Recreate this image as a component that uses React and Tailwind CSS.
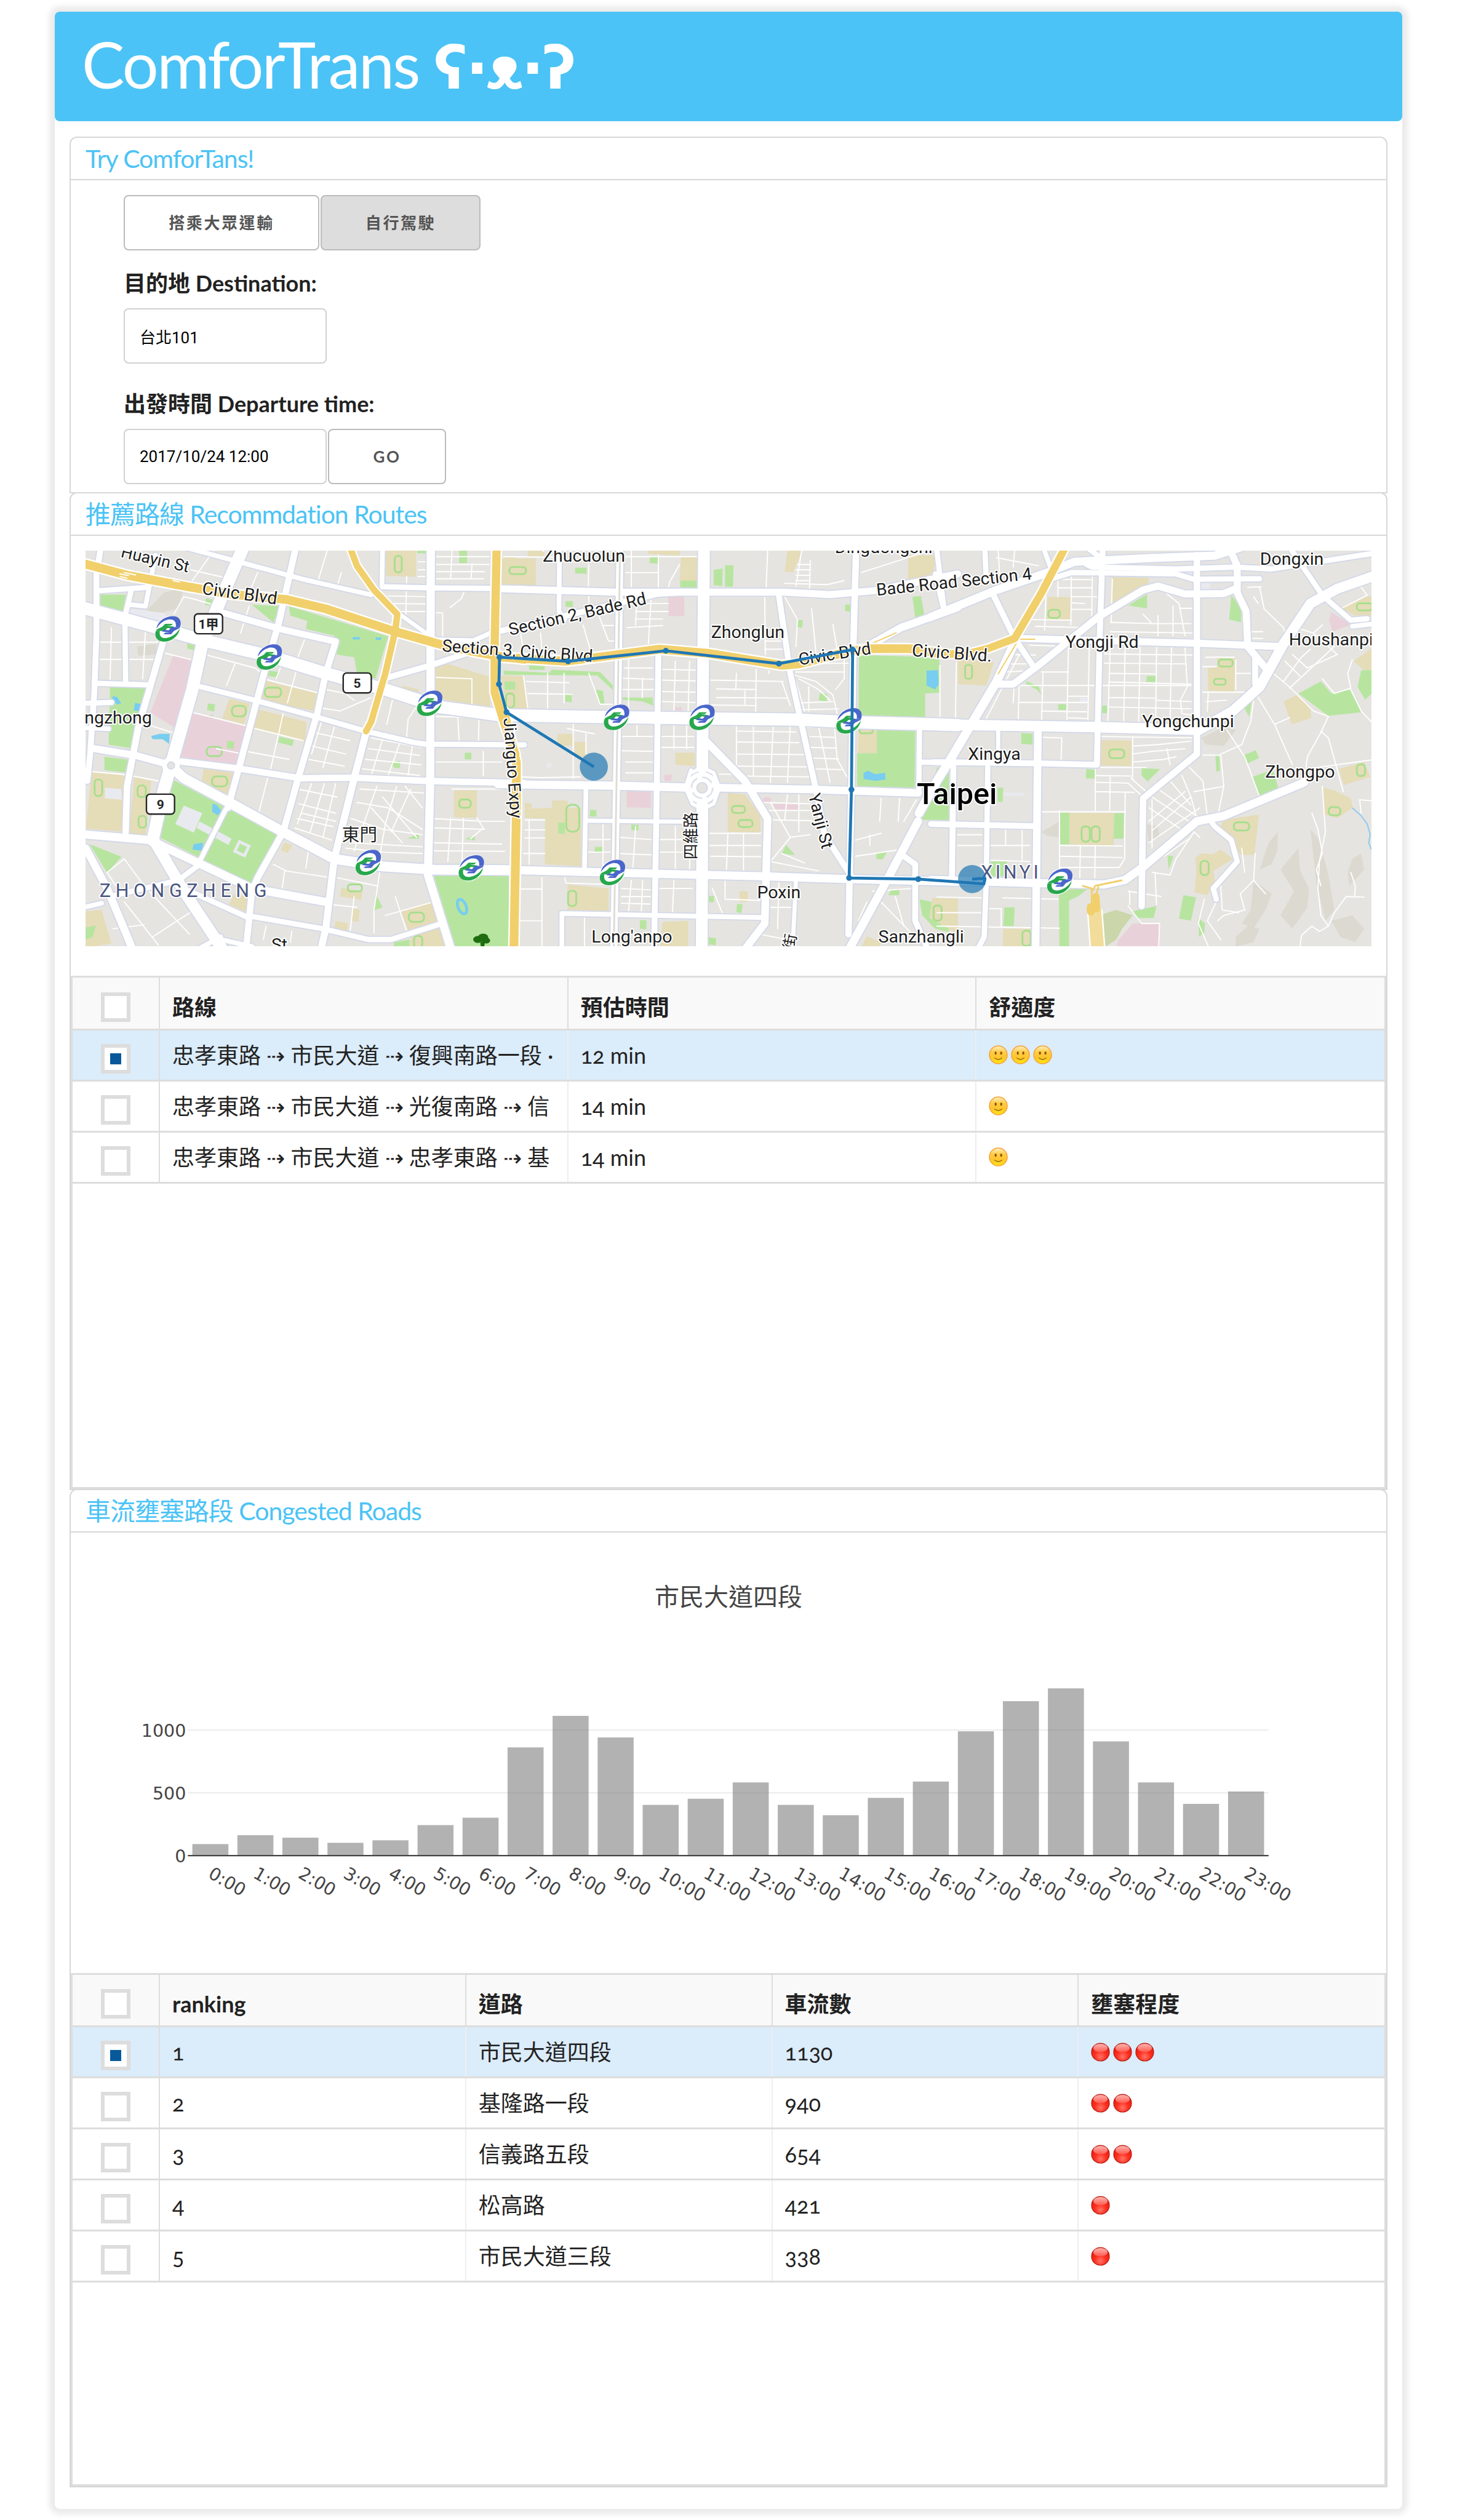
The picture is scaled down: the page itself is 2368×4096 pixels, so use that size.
import React from 'react';

/* ---------- Map data ---------- */

// The map is described in three tiles; each point is projected to map units.
const TILES = {
  w: { x: -26, sx: 0.4847 },
  c: { x: 714, sx: 0.4847 },
  e: { x: 1454, sx: 0.5102 },
};

function project(tile, points) {
  const t = TILES[tile];
  return points
    .trim()
    .split(/\s+/)
    .map((p) => {
      const [x, y] = p.split(',').map(Number);
      return `${(t.x + x * t.sx).toFixed(1)},${(y * 0.4592 - 20).toFixed(1)}`;
    })
    .join(' ');
}

const ROADS = [
  ['w', '40,255 200,300 480,380 700,435 900,500 1110,560 1300,625 1510,655', 21],
  ['c', '-20,655 230,660 700,668 1040,672 1240,682 1600,692', 21],
  ['e', '-20,690 535,700 870,710', 18],
  ['w', '610,30 520,250 465,390 430,560 355,840 330,930 290,1120', 21],
  ['w', '795,30 735,310 680,510 600,830 555,1000', 11],
  ['w', '548,1005 460,1190', 8],
  ['w', '108,30 92,130 92,350 85,560 70,800 60,900', 10],
  ['w', '105,192 270,180', 9],
  ['w', '300,60 265,250 215,245', 8],
  ['w', '215,190 192,290 195,530', 9],
  ['w', '328,380 240,700 200,920 195,1090', 11],
  ['w', '95,537 285,543', 9],
  ['w', '75,778 230,805 350,840', 12],
  ['w', '390,828 600,855 810,890 1000,888 1250,900 1600,908', 11],
  ['w', '40,612 145,608', 9],
  ['w', '40,702 135,706', 8],
  ['w', '460,550 650,600 860,660 1040,715 1210,757 1250,763 1600,766', 9],
  ['w', '540,275 740,335 935,382 900,500 870,650 800,900 750,1090 660,1260 640,1310 620,1516', 11],
  ['w', '1042,720 1000,890 930,1190 900,1450 880,1540', 12],
  ['w', '350,840 400,890 560,980 750,1090 930,1190 1100,1218 1280,1230 1560,1232', 17],
  ['w', '40,1098 280,1120 420,1190 640,1300 900,1350', 14],
  ['w', '300,1130 400,1310 545,1540', 19],
  ['w', '54,1150 130,1300 225,1540', 13],
  ['w', '1270,30 1268,900 1260,1250 1345,1540', 14],
  ['w', '1100,178 1270,182 1600,185', 9],
  ['w', '1270,375 1420,378 1480,350 1600,320', 8],
  ['w', '1110,518 1270,470 1440,410', 10],
  ['w', '400,30 610,90 820,150 1060,208', 8],
  ['w', '1100,30 1098,175', 8],
  ['w', '630,1402 890,1450 1050,1490 1130,1490 1310,1430', 9],
  ['w', '160,1325 380,1270 450,1215', 9],
  ['w', '400,1300 620,1405', 9],
  ['w', '40,1372 110,1355', 8],
  ['w', '530,1490 640,1516', 8],
  ['w', '460,1520 530,1480', 8],
  ['w', '1160,280 1280,370', 7],
  ['c', '-20,185 400,198 730,198 990,198 1150,207 1310,192 1600,130', 12],
  ['c', '197,30 195,270 215,300', 8],
  ['c', '410,30 402,640 388,1540', 12],
  ['c', '545,430 540,900 530,1540', 10],
  ['c', '706,30 700,850', 20],
  ['c', '700,990 698,1540', 20],
  ['c', '1242,30 1232,400 1225,930 1215,1470', 11],
  ['c', '970,212 1010,500 1100,930 1130,1100 1225,1255', 10],
  ['c', '-10,342 220,285 540,205 640,198', 10],
  ['c', '-20,912 400,918 660,925', 14],
  ['c', '740,925 1100,932 1460,945', 13],
  ['c', '-20,1230 530,1245 920,1255 1220,1265 1600,1275', 14],
  ['c', '715,755 850,900 930,1040 920,1430 840,1540', 13],
  ['c', '290,930 285,1220', 8],
  ['c', '290,1048 670,1052', 7],
  ['c', '205,1540 205,1393 920,1408', 8],
  ['c', '1030,1270 1020,1480', 7],
  ['c', '1410,1180 1450,1210 1450,1420 1500,1540', 10],
  ['c', '1465,700 1463,940', 9],
  ['c', '1470,830 1600,832', 9],
  ['c', '1290,395 1400,330 1600,255', 13],
  ['c', '1525,30 1550,250', 9],
  ['c', '1210,1540 1350,1270 1460,1050', 14],
  ['c', '660,860 640,925 665,985 700,1005 740,985 760,925 740,870 700,850 660,870', 6],
  ['e', '-20,290 200,190 370,125 460,85 700,72 930,62 1020,30', 14],
  ['e', '500,95 520,105 800,112 1000,105 1120,112 1470,52', 9],
  ['e', '380,150 450,125 800,130 860,150 1080,148', 9],
  ['e', '555,30 545,350 535,840 340,835 -10,830', 10],
  ['e', '500,30 560,80', 9],
  ['e', '870,60 870,800 690,965 685,1365', 11],
  ['e', '985,50 1005,100 1005,200 1035,270 1040,400 1100,480', 12],
  ['e', '1065,440 1065,540', 10],
  ['e', '1470,135 1340,185 1250,240 1160,390 1080,550 990,640 870,715', 17],
  ['e', '275,370 440,375 870,388 1145,400', 12],
  ['e', '195,540 255,540 340,470 440,380 540,290 690,190 740,175 830,205 960,203 1000,185', 12],
  ['e', '185,200 260,370 320,470', 10],
  ['e', '160,30 165,150', 9],
  ['e', '355,30 385,120', 8],
  ['e', '-5,130 20,250', 9],
  ['e', '1180,30 1290,210 1385,302 1440,297', 9],
  ['e', '1390,325 1470,315', 8],
  ['e', '260,385 200,530 120,680 45,820 0,900 -60,1020', 15],
  ['e', '338,715 330,1540', 13],
  ['e', '205,715 205,830', 7],
  ['e', '170,850 165,1270 158,1480 130,1540', 9],
  ['e', '55,850 50,1270', 10],
  ['e', '-20,1060 320,1068', 10],
  ['e', '-20,1268 330,1280 560,1285 630,1268 690,1220 870,1050 960,1030 1230,905', 14],
  ['e', '910,1040 930,1070 985,1120 1005,1200 925,1300 935,1340', 9],
];

const HIGHWAYS = [
  ['w', '40,90 200,135 400,175 560,205 760,225 900,260 1130,340 1330,400 1500,435 1600,448', 15],
  ['w', '985,30 1010,100 1070,190 1152,280 1145,340 1110,500 1060,680 1042,715', 11],
  ['w', '1502,30 1495,400 1495,570 1530,690 1568,800', 14],
  ['c', '0,640 45,830 45,1000 36,1540', 15],
  ['c', '-10,440 220,455 390,432 550,410 720,425 980,470 1040,465 1230,415 1300,408 1430,408 1540,425', 15],
  ['e', '430,30 350,200 260,370 170,408 100,428 0,428 -50,415', 13],
];

const HIGHWAY_RAMPS = [
  ['c', '1290,392 1383,349', 2],
  ['e', '270,380 205,502', 2],
  ['e', '275,373 328,373', 2],
  ['e', '488,1290 518,1300 518,1370', 3],
  ['e', '618,1270 530,1290 520,1310', 3],
  ['e', '540,1295 532,1330', 3],
];

const GREEN = [
  ['w', '360,895 730,1100 640,1285 315,1110'],
  ['w', '770,250 1120,362 1075,520 1010,500 1000,440 940,430 930,360 830,335 835,305 775,285'],
  ['w', '640,245 740,250 715,310'],
  ['w', '140,550 278,550 220,780 135,765'],
  ['w', '100,207 195,207 187,267 103,250'],
  ['w', '120,810 214,822 205,870 120,860'],
  ['w', '68,1135 180,1182 130,1242'],
  ['w', '1280,1248 1545,1250 1545,1520 1358,1520'],
  ['w', '478,220 515,230 500,250 475,245'],
  ['w', '412,388 438,390 436,415 412,408'],
  ['w', '484,612 510,615 507,642 482,637'],
  ['w', '553,750 578,753 576,782 551,778'],
  ['w', '736,735 788,748 782,770 732,757'],
  ['w', '700,490 735,495 730,515 697,510'],
  ['w', '1390,795 1413,795 1413,820 1390,820'],
  ['w', '1128,832 1162,825 1162,853 1140,850'],
  ['w', '1370,44 1398,44 1398,90 1370,90'],
  ['w', '1222,44 1262,44 1255,54 1222,54'],
  ['w', '1075,1320 1100,1370 1070,1382'],
  ['w', '1530,530 1568,530 1568,560 1530,560'],
  ['w', '1185,1115 1228,1098 1228,1115'],
  ['w', '1390,1115 1425,1104 1425,1122'],
  ['w', '54,1445 90,1438 80,1480 54,1490'],
  ['w', '1140,1500 1195,1490 1195,1516 1140,1516'],
  ['c', '1252,432 1535,440 1535,572 1485,575 1485,662 1250,656'],
  ['c', '1315,705 1450,710 1448,925 1245,920 1245,797 1315,797'],
  ['c', '0,490 160,498 170,486 340,495 385,545 385,562 330,508 0,505'],
  ['c', '90,470 145,473 145,487 90,487'],
  ['c', '417,590 525,590 527,620 490,605 417,598'],
  ['c', '325,560 350,565 355,612 340,612'],
  ['c', '217,575 240,575 240,607 217,605'],
  ['c', '780,98 810,98 808,178 780,178'],
  ['c', '740,115 772,110 770,175 740,172'],
  ['c', '218,232 244,232 244,254 218,252'],
  ['c', '252,107 292,107 292,130 252,128'],
  ['c', '515,66 543,66 543,92 515,90'],
  ['c', '622,155 680,155 680,182 622,182'],
  ['c', '1440,215 1470,212 1482,280 1450,292'],
  ['c', '1203,245 1225,243 1222,272 1203,268'],
  ['c', '1035,302 1054,302 1052,330 1032,328'],
  ['c', '1115,573 1140,577 1138,605 1110,600'],
  ['c', '305,1008 327,1008 327,1033 303,1032'],
  ['c', '192,1055 216,1055 216,1098 192,1095'],
  ['c', '450,1062 476,1064 474,1085 450,1083'],
  ['c', '322,1145 348,1145 348,1168 320,1166'],
  ['c', '980,1170 995,1138 1027,1176'],
  ['c', '1315,1165 1352,1163 1335,1192 1312,1190'],
  ['c', '1365,1305 1395,1305 1393,1325 1355,1325'],
  ['c', '1465,1340 1508,1350 1500,1410 1568,1450 1568,1462 1520,1450 1475,1400'],
  ['c', '480,1418 503,1418 503,1452 480,1450'],
  ['c', '720,1482 748,1485 748,1511 720,1508'],
  ['c', '720,1328 742,1328 740,1352 720,1350'],
  ['c', '822,1358 842,1358 838,1392 820,1388'],
  ['c', '-5,1248 12,1248 10,1520 -5,1520'],
  ['e', '0,850 40,850 40,1045 -65,1045 -20,960'],
  ['e', '203,925 222,925 220,978 203,978'],
  ['e', '703,205 703,258 640,248'],
  ['e', '985,210 1018,255 1018,310 978,300'],
  ['e', '702,510 733,510 733,532 700,532'],
  ['e', '406,615 433,615 433,636 406,636'],
  ['e', '550,620 569,620 569,648 550,648'],
  ['e', '282,722 320,724 320,765 282,762'],
  ['e', '500,856 530,858 528,892 498,890'],
  ['e', '685,853 747,856 705,902 685,880'],
  ['e', '1030,630 1055,592 1045,662'],
  ['e', '1210,575 1285,530 1320,575 1385,560 1420,645 1310,658'],
  ['e', '1420,488 1470,488 1470,560 1433,598 1408,550'],
  ['e', '1025,805 1067,786 1078,815 1038,836'],
  ['e', '1055,885 1125,858 1142,925 1078,955'],
  ['e', '932,806 945,808 947,862 935,866'],
  ['e', '410,1017 443,1017 443,1136 410,1136'],
  ['e', '593,1020 626,1020 624,1115 591,1115'],
  ['e', '180,1200 235,1200 230,1255 180,1255'],
  ['e', '408,1305 505,1300 475,1328 442,1345 442,1520 410,1520'],
  ['e', '225,1370 260,1370 257,1440 222,1440'],
  ['e', '655,1385 735,1365 725,1410 670,1410'],
  ['e', '825,1325 867,1333 850,1420 810,1412'],
  ['e', '772,1178 792,1180 775,1230'],
  ['e', '875,1410 897,1430 895,1465 877,1480'],
  ['e', '-20,430 8,440 8,480 -20,480'],
  ['e', '297,528 340,548 350,580 335,560 300,542'],
];

const SAND = [
  ['w', '75,867 195,880 182,1088 55,1078'],
  ['w', '225,885 285,900 265,1105 207,1098'],
  ['w', '1112,40 1218,40 1218,140 1112,138'],
  ['w', '1530,65 1568,65 1568,175 1528,170'],
  ['w', '1285,470 1330,465 1475,512 1480,627 1285,592'],
  ['w', '560,595 632,612 612,690 535,668'],
  ['w', '655,632 832,680 828,755 645,705'],
  ['w', '690,528 870,575 860,640 675,600'],
  ['w', '1352,935 1432,935 1432,1037 1352,1035'],
  ['w', '1165,1385 1275,1348 1308,1428 1190,1455'],
  ['w', '1200,1475 1315,1440 1350,1520 1195,1520'],
  ['w', '54,1385 110,1380 145,1505 54,1520'],
  ['w', '470,853 575,870 555,950 462,905'],
  ['w', '575,1322 635,1332 620,1388 560,1360'],
  ['w', '955,1298 1030,1310 1025,1342 950,1330'],
  ['w', '935,1420 980,1430 975,1462 930,1452'],
  ['w', '995,1375 1020,1380 1015,1425 990,1420'],
  ['w', '755,1128 782,1140 765,1168 742,1158'],
  ['w', '1170,545 1228,560 1225,572 1170,560'],
  ['c', '-10,73 113,73 113,172 -10,170'],
  ['c', '85,40 145,40 140,66 85,66'],
  ['c', '510,40 620,40 620,62 510,56'],
  ['c', '625,68 684,68 684,156 620,156'],
  ['c', '1000,40 1053,40 1020,125 990,122'],
  ['c', '1425,60 1520,62 1515,128 1425,162'],
  ['c', '-10,508 70,510 85,630 10,630'],
  ['c', '190,725 243,725 243,770 190,768'],
  ['c', '250,755 289,755 289,815 250,812'],
  ['c', '605,795 673,795 673,845 605,840'],
  ['c', '75,980 98,985 98,1003 170,1000 170,973 225,973 225,1000 272,1000 272,1217 145,1210 145,1040 75,1038'],
  ['c', '790,945 850,950 905,1030 905,1092 790,1090'],
  ['c', '225,1285 370,1300 370,1385 225,1380'],
  ['c', '560,1425 650,1420 650,1520 550,1520'],
  ['c', '1250,705 1315,705 1315,797 1248,797'],
  ['c', '1510,1335 1600,1340 1600,1470 1500,1410'],
  ['c', '832,1310 860,1310 860,1350 830,1350'],
  ['c', '1280,1478 1330,1500 1320,1520 1260,1520'],
  ['e', '70,440 190,460 165,545 70,540'],
  ['e', '370,215 448,217 448,302 367,300'],
  ['e', '587,142 709,145 705,190 585,240'],
  ['e', '938,442 998,445 996,568 907,565 907,480 938,478'],
  ['e', '545,748 651,750 650,845 545,842'],
  ['e', '443,1018 593,1020 591,1140 443,1136'],
  ['e', '1160,605 1205,580 1250,625 1253,665 1188,690'],
  ['e', '1350,255 1440,212 1470,220 1470,285 1400,285'],
  ['e', '1395,455 1470,395 1470,490 1430,488'],
  ['e', '1345,855 1430,830 1450,885 1362,915'],
  ['e', '1292,925 1330,935 1385,965 1392,1000 1340,1038 1298,1025'],
  ['e', '960,1045 1078,1025 1062,1175 1015,1175 990,1110 945,1080'],
  ['e', '865,1185 885,1170 925,1172 950,1155 990,1190 925,1235 930,1270 905,1325 862,1315 868,1240'],
  ['e', '0,1335 70,1338 68,1448 20,1460 -20,1440'],
  ['e', '222,1450 315,1450 315,1520 220,1520'],
];

const PINK = [
  ['w', '362,435 442,452 372,705 282,645'],
  ['w', '430,648 620,698 588,842 385,810'],
  ['c', '580,215 636,215 636,287 580,287'],
  ['c', '433,935 520,938 520,1000 433,998'],
  ['c', '565,878 594,876 590,900 567,900'],
  ['c', '920,960 943,962 940,982 905,980'],
  ['c', '950,985 1040,988 1040,1008 950,1005'],
  ['c', '605,626 628,626 626,640 605,640'],
  ['e', '1320,272 1385,318 1325,345 1312,305'],
  ['e', '655,1430 745,1430 745,1520 600,1520 605,1495'],
];

const WATER = [
  ['w', '150,585 165,588 180,612 165,615 145,600'],
  ['w', '228,610 253,615 250,642 223,638'],
  ['w', '285,733 315,725 350,725 348,762 325,745 290,745'],
  ['w', '500,985 515,988 532,1012 520,1028 500,1015'],
  ['w', '435,1135 468,1130 465,1160 430,1155'],
  ['w', '995,365 1020,365 1020,374 995,374'],
  ['w', '1076,366 1096,366 1094,376 1076,376'],
  ['c', '1490,490 1530,488 1533,540 1520,560 1490,545'],
  ['c', '1268,870 1285,862 1308,875 1345,870 1345,895 1310,900 1268,893'],
];

const BUILDINGS = [
  ['w', '400,992 465,1020 435,1092 370,1060'],
  ['w', '455,1050 568,1115 557,1138 445,1075'],
  ['w', '205,260 330,275 350,310 205,300'],
  ['w', '122,925 180,930 182,970 122,965'],
  ['e', '800,130 860,100 860,155'],
  ['e', '880,160 915,160 913,195 880,195'],
  ['e', '478,590 503,590 503,612 478,610'],
  ['e', '220,943 295,945 290,955 230,955'],
  ['c', '152,835 168,835 168,850 152,850'],
];

const HILLS = [
  ['w', '330,200 400,180 380,260 300,280 270,265'],
  ['w', '235,400 305,390 300,430 240,435'],
  ['w', '430,700 500,650 520,700 480,770 560,790 500,830 410,800'],
  ['w', '1440,1400 1475,1395 1465,1440 1440,1440'],
  ['e', '885,740 960,700 1000,710 960,770 900,765'],
  ['e', '350,1090 410,1050 410,1110 370,1105'],
  ['e', '1110,1130 1140,1090 1140,1160 1120,1210 1080,1230'],
  ['e', '1150,1230 1210,1150 1215,1230 1245,1300 1240,1370 1190,1450 1150,1400 1195,1310'],
  ['e', '1250,1080 1280,1120 1310,1250 1330,1380 1300,1420 1270,1280'],
  ['e', '1060,1270 1120,1320 1100,1380 1060,1450 1020,1430 1050,1380'],
  ['e', '1390,1190 1420,1170 1430,1230 1380,1290 1375,1240'],
  ['e', '1040,1440 1080,1450 1060,1500 1000,1516 1000,1480'],
  ['e', '1320,1420 1390,1400 1430,1450 1400,1500 1350,1480'],
  ['e', '700,1060 740,1070 745,1110 710,1130'],
];

const STREETS = [
  ['w', '505,44 430,155'],
  ['w', '425,115 570,150'],
  ['w', '660,125 630,200'],
  ['w', '905,44 870,165'],
  ['w', '955,125 940,175'],
  ['w', '365,280 400,215 440,225 520,250'],
  ['w', '335,425 430,450'],
  ['w', '475,430 650,480 670,495'],
  ['w', '580,465 550,545'],
  ['w', '630,250 600,350'],
  ['w', '825,375 800,445'],
  ['w', '680,520 880,575'],
  ['w', '795,495 765,610'],
  ['w', '740,480 725,520'],
  ['w', '430,645 620,695'],
  ['w', '650,705 820,750'],
  ['w', '750,650 705,860'],
  ['w', '620,790 770,820'],
  ['w', '515,780 595,797'],
  ['w', '285,695 360,720'],
  ['w', '695,890 665,1015'],
  ['w', '105,384 205,384'],
  ['w', '105,448 310,448'],
  ['w', '145,330 140,530'],
  ['w', '265,340 255,520'],
  ['w', '205,384 330,384'],
  ['w', '70,865 210,878'],
  ['w', '210,880 310,900'],
  ['w', '890,630 950,640 1060,590'],
  ['w', '900,560 970,575 1000,600'],
  ['w', '1135,600 1115,690'],
  ['w', '1235,600 1190,670 1185,735'],
  ['w', '800,930 940,960'],
  ['w', '805,985 935,1020'],
  ['w', '800,1040 925,1070'],
  ['w', '850,910 800,1060'],
  ['w', '895,910 845,1090'],
  ['w', '935,910 890,1110'],
  ['w', '790,1075 920,1120'],
  ['w', '815,1020 935,1050'],
  ['w', '860,720 985,750'],
  ['w', '850,770 970,800'],
  ['w', '840,820 965,845'],
  ['w', '885,680 850,800'],
  ['w', '930,700 890,850'],
  ['w', '1060,740 1235,775'],
  ['w', '1050,780 1230,805'],
  ['w', '1040,820 1235,840'],
  ['w', '1030,855 1230,880'],
  ['w', '1100,745 1060,880'],
  ['w', '1160,760 1120,880'],
  ['w', '1205,770 1190,880'],
  ['w', '1020,930 1245,945'],
  ['w', '1010,980 1120,1000 1240,1080'],
  ['w', '990,1040 1100,1080 1240,1100'],
  ['w', '985,1130 1240,1145'],
  ['w', '1080,920 1040,1040 1000,1160'],
  ['w', '1150,920 1110,1060 1090,1180'],
  ['w', '1060,1000 1170,1130'],
  ['w', '1100,960 1220,1110'],
  ['w', '1180,920 1240,1000'],
  ['w', '970,1150 1100,1165 1240,1170'],
  ['w', '1200,930 1130,1090'],
  ['w', '715,1210 760,1235 920,1260'],
  ['w', '755,1235 745,1310'],
  ['w', '840,1150 830,1225'],
  ['w', '780,1130 920,1160'],
  ['w', '940,1260 1080,1290'],
  ['w', '1090,1240 1070,1380 1070,1465'],
  ['w', '1110,1400 1280,1350'],
  ['w', '1145,1330 1185,1460'],
  ['w', '920,1360 1010,1370'],
  ['w', '1000,1330 985,1470'],
  ['w', '190,1190 130,1240 160,1290'],
  ['w', '190,1190 260,1290 420,1470'],
  ['w', '190,1350 310,1510'],
  ['w', '450,1370 290,1480'],
  ['w', '150,1450 260,1435'],
  ['w', '1455,790 1455,880'],
  ['w', '1280,830 1520,830'],
  ['w', '1345,930 1520,930'],
  ['w', '1285,515 1415,520 1415,620'],
  ['w', '1280,660 1500,665'],
  ['w', '1365,660 1370,750'],
  ['w', '1440,665 1438,750'],
  ['w', '1330,400 1280,380'],
  ['w', '690,1440 680,1490'],
  ['w', '780,1460 775,1500'],
  ['w', '1225,85 1260,85'],
  ['w', '1225,115 1260,115'],
  ['w', '1225,140 1260,140'],
  ['w', '1290,95 1475,95'],
  ['w', '1290,122 1460,122'],
  ['w', '1290,148 1455,148'],
  ['w', '1345,44 1340,148'],
  ['w', '1415,95 1412,148'],
  ['w', '1290,66 1475,66'],
  ['w', '1120,212 1255,215'],
  ['w', '1130,240 1255,242'],
  ['w', '1150,270 1255,270'],
  ['w', '1185,140 1182,300'],
  ['w', '1390,190 1378,222 1338,255'],
  ['w', '1280,275 1312,275 1312,365'],
  ['w', '1280,1040 1450,1050 1530,1050'],
  ['w', '1280,1075 1460,1080'],
  ['w', '1280,1130 1520,1135'],
  ['w', '1280,1160 1530,1162'],
  ['w', '1340,1040 1330,1200'],
  ['w', '1385,1040 1380,1200'],
  ['w', '1432,1037 1455,1075 1410,1115'],
  ['c', '425,66 680,66'],
  ['c', '430,125 545,125'],
  ['c', '545,60 545,180'],
  ['c', '450,44 450,180'],
  ['c', '620,95 585,160 580,185'],
  ['c', '300,95 298,180'],
  ['c', '0,66 185,68'],
  ['c', '930,44 925,180'],
  ['c', '1050,44 1030,175'],
  ['c', '1080,80 1078,185'],
  ['c', '1035,95 1080,95'],
  ['c', '1030,115 1080,115'],
  ['c', '1030,135 1080,135'],
  ['c', '1030,155 1080,155'],
  ['c', '990,165 1140,170 1200,155'],
  ['c', '1260,125 1500,44'],
  ['c', '920,215 922,430'],
  ['c', '990,215 1035,300 1030,400'],
  ['c', '1085,260 1100,420'],
  ['c', '1160,318 1175,410'],
  ['c', '920,380 980,380'],
  ['c', '920,410 990,410'],
  ['c', '465,240 580,240'],
  ['c', '465,270 580,270'],
  ['c', '465,298 560,298'],
  ['c', '435,330 560,322'],
  ['c', '470,215 465,320'],
  ['c', '520,215 510,390'],
  ['c', '300,210 300,235'],
  ['c', '330,270 370,380 390,380'],
  ['c', '280,320 305,410'],
  ['c', '130,350 135,410'],
  ['c', '60,355 70,410'],
  ['c', '350,322 395,322'],
  ['c', '560,400 565,395'],
  ['c', '70,510 85,630'],
  ['c', '155,500 155,635'],
  ['c', '213,500 213,610'],
  ['c', '85,575 240,578'],
  ['c', '80,530 230,535'],
  ['c', '300,500 340,615 385,615'],
  ['c', '440,450 440,640'],
  ['c', '490,520 488,590'],
  ['c', '417,518 530,522'],
  ['c', '420,560 530,560'],
  ['c', '425,480 525,480'],
  ['c', '560,485 675,488'],
  ['c', '560,525 675,528'],
  ['c', '560,568 675,570'],
  ['c', '560,605 675,608'],
  ['c', '605,455 600,640'],
  ['c', '655,455 650,640'],
  ['c', '730,525 985,530'],
  ['c', '750,558 890,560'],
  ['c', '750,590 1000,592'],
  ['c', '820,500 818,560'],
  ['c', '890,485 888,645'],
  ['c', '850,565 850,615'],
  ['c', '730,618 890,620'],
  ['c', '935,490 935,500'],
  ['c', '980,530 1010,620'],
  ['c', '1020,505 1100,530 1160,580 1175,650'],
  ['c', '1040,520 1110,560 1150,600'],
  ['c', '1030,495 1195,495'],
  ['c', '1040,465 1220,462'],
  ['c', '1045,610 1160,605'],
  ['c', '1050,635 1180,632'],
  ['c', '1030,530 1060,640'],
  ['c', '1075,550 1075,640'],
  ['c', '1170,560 1200,520 1200,425'],
  ['c', '820,715 1030,718'],
  ['c', '820,755 1040,758'],
  ['c', '820,800 1060,802'],
  ['c', '820,845 1070,848'],
  ['c', '850,882 1080,885'],
  ['c', '820,690 820,850'],
  ['c', '880,690 880,880'],
  ['c', '950,690 940,905'],
  ['c', '1010,690 1000,905'],
  ['c', '1070,700 1165,702'],
  ['c', '1080,735 1165,738'],
  ['c', '1080,775 1170,778'],
  ['c', '1090,815 1180,818'],
  ['c', '1095,855 1190,858'],
  ['c', '1110,700 1150,905'],
  ['c', '1165,690 1175,820 1210,885'],
  ['c', '760,875 840,875'],
  ['c', '245,690 245,890'],
  ['c', '225,705 245,710 320,725'],
  ['c', '290,725 290,800'],
  ['c', '60,885 130,888 270,885'],
  ['c', '415,735 525,735'],
  ['c', '415,788 525,790'],
  ['c', '430,830 525,830'],
  ['c', '430,870 525,870'],
  ['c', '470,690 470,735'],
  ['c', '555,735 670,735'],
  ['c', '555,775 670,775'],
  ['c', '600,690 600,780'],
  ['c', '645,690 645,780'],
  ['c', '75,1045 145,1045'],
  ['c', '75,1082 145,1082'],
  ['c', '75,1112 145,1112'],
  ['c', '70,1170 145,1170'],
  ['c', '90,1045 90,1210'],
  ['c', '300,1118 375,1118'],
  ['c', '300,1165 375,1165'],
  ['c', '350,1060 350,1220'],
  ['c', '410,1110 520,1118'],
  ['c', '410,1170 520,1175'],
  ['c', '465,1070 455,1230'],
  ['c', '550,1118 670,1118'],
  ['c', '550,1165 670,1165'],
  ['c', '605,1070 605,1230'],
  ['c', '660,1010 655,1230'],
  ['c', '725,1095 905,1095'],
  ['c', '725,1140 905,1140'],
  ['c', '790,1095 785,1230'],
  ['c', '845,1095 845,1240'],
  ['c', '730,1180 905,1182'],
  ['c', '940,980 1010,1110 1080,1100'],
  ['c', '910,980 1080,985'],
  ['c', '935,1010 1080,1010'],
  ['c', '950,1045 1085,1048'],
  ['c', '1000,950 990,1045'],
  ['c', '1040,950 1040,1090'],
  ['c', '1010,1110 940,1200 1110,1235'],
  ['c', '980,1170 1060,1205'],
  ['c', '1240,1120 1330,1095'],
  ['c', '1240,1180 1400,1155'],
  ['c', '1330,965 1325,1050'],
  ['c', '1395,965 1390,1050'],
  ['c', '1455,970 1410,1050'],
  ['c', '1290,1100 1290,1140'],
  ['c', '415,1300 520,1305'],
  ['c', '415,1330 520,1330'],
  ['c', '415,1355 520,1358'],
  ['c', '450,1270 440,1385'],
  ['c', '490,1270 485,1385'],
  ['c', '600,1270 595,1390'],
  ['c', '550,1300 665,1300'],
  ['c', '215,1260 220,1280 370,1285'],
  ['c', '60,1302 135,1302'],
  ['c', '60,1420 135,1420'],
  ['c', '135,1260 135,1516'],
  ['c', '285,1410 285,1516'],
  ['c', '735,1300 770,1390'],
  ['c', '780,1270 780,1340 910,1345'],
  ['c', '940,1300 1020,1300'],
  ['c', '940,1370 1015,1370'],
  ['c', '970,1275 965,1450'],
  ['c', '900,1470 1000,1490'],
  ['c', '1300,1310 1440,1300'],
  ['c', '1250,1420 1280,1350'],
  ['c', '1320,1340 1440,1470'],
  ['c', '1380,1330 1410,1440'],
  ['e', '405,150 520,152'],
  ['e', '405,182 520,182'],
  ['e', '450,215 540,215'],
  ['e', '450,238 495,240'],
  ['e', '450,262 520,262'],
  ['e', '405,150 405,215'],
  ['e', '520,140 518,290'],
  ['e', '450,140 448,320'],
  ['e', '330,325 500,330'],
  ['e', '320,300 450,302'],
  ['e', '365,215 360,340'],
  ['e', '580,310 720,315'],
  ['e', '580,345 860,350'],
  ['e', '690,280 720,315 850,315'],
  ['e', '740,285 740,360'],
  ['e', '790,250 790,360'],
  ['e', '770,205 810,240 830,360'],
  ['e', '815,258 855,258'],
  ['e', '587,150 583,310'],
  ['e', '310,395 440,400'],
  ['e', '350,495 440,495'],
  ['e', '280,545 850,545'],
  ['e', '275,608 505,608'],
  ['e', '350,640 500,643'],
  ['e', '440,400 435,675'],
  ['e', '510,400 505,675'],
  ['e', '355,500 350,675'],
  ['e', '275,545 272,670'],
  ['e', '440,585 505,585'],
  ['e', '440,665 505,668'],
  ['e', '560,428 855,432'],
  ['e', '560,462 830,465'],
  ['e', '580,500 730,502'],
  ['e', '575,532 850,540'],
  ['e', '575,590 730,592'],
  ['e', '575,625 850,632'],
  ['e', '735,600 850,605'],
  ['e', '580,400 572,680'],
  ['e', '630,400 625,680'],
  ['e', '680,400 675,680'],
  ['e', '735,400 732,680'],
  ['e', '785,400 780,680'],
  ['e', '830,400 838,550 815,600 820,650 850,655'],
  ['e', '900,440 995,440'],
  ['e', '890,475 935,475'],
  ['e', '890,570 1050,570'],
  ['e', '908,570 905,640'],
  ['e', '1000,450 1000,560'],
  ['e', '1000,500 1050,500'],
  ['e', '900,605 970,600'],
  ['e', '10,470 10,660'],
  ['e', '65,460 62,665'],
  ['e', '250,430 330,432'],
  ['e', '245,465 300,465'],
  ['e', '225,495 310,490'],
  ['e', '290,400 220,550 165,668'],
  ['e', '258,555 255,610'],
  ['e', '1040,180 1085,178'],
  ['e', '1080,180 1095,260 1160,330 1170,370'],
  ['e', '1050,345 1090,345'],
  ['e', '1050,370 1090,370'],
  ['e', '1060,215 1075,240'],
  ['e', '355,738 418,740 415,825'],
  ['e', '545,735 860,740'],
  ['e', '660,770 740,765 850,752'],
  ['e', '655,800 720,790 830,780'],
  ['e', '655,830 760,820 800,810'],
  ['e', '770,780 780,840'],
  ['e', '545,850 700,850'],
  ['e', '530,880 650,882'],
  ['e', '530,905 640,908 690,960'],
  ['e', '530,940 660,942'],
  ['e', '655,735 655,890'],
  ['e', '650,890 700,940'],
  ['e', '530,855 530,1010'],
  ['e', '580,885 578,1010'],
  ['e', '630,945 628,1190 610,1222 410,1222'],
  ['e', '350,1015 630,1015'],
  ['e', '410,1140 620,1142'],
  ['e', '410,1180 620,1185'],
  ['e', '410,1010 410,1280'],
  ['e', '480,1140 478,1260'],
  ['e', '530,1140 528,1260'],
  ['e', '180,1195 310,1200'],
  ['e', '180,1140 310,1140'],
  ['e', '230,1075 230,1140'],
  ['e', '285,1075 285,1200'],
  ['e', '70,1140 150,1140'],
  ['e', '70,1100 150,1100'],
  ['e', '0,1332 150,1335'],
  ['e', '0,1390 150,1390'],
  ['e', '0,1440 410,1448'],
  ['e', '220,1335 405,1340'],
  ['e', '175,1375 215,1375 215,1440'],
  ['e', '740,930 880,1040'],
  ['e', '720,960 870,1070'],
  ['e', '710,1000 830,1090'],
  ['e', '710,1130 880,1000'],
  ['e', '720,1085 850,960'],
  ['e', '710,1050 830,940'],
  ['e', '780,900 850,990'],
  ['e', '720,970 720,1150'],
  ['e', '820,880 850,960 870,1040'],
  ['e', '845,850 890,900 905,1030'],
  ['e', '860,940 960,920'],
  ['e', '890,804 950,804 960,920 940,1030'],
  ['e', '760,1180 850,1110'],
  ['e', '850,1080 880,1110'],
  ['e', '780,1250 800,1190 860,1090'],
  ['e', '970,710 1030,810 1080,960'],
  ['e', '950,800 1020,765 1050,680 1060,600'],
  ['e', '1070,580 1130,690 1190,840'],
  ['e', '1130,690 1180,665'],
  ['e', '1120,495 1180,550 1260,640 1310,660'],
  ['e', '1165,455 1215,510'],
  ['e', '1190,430 1240,480'],
  ['e', '1160,530 1220,440 1250,410'],
  ['e', '1180,555 1330,400'],
  ['e', '1240,480 1340,430'],
  ['e', '1200,330 1260,350 1340,430'],
  ['e', '1260,350 1290,320'],
  ['e', '1290,520 1330,575 1385,555 1375,500 1390,450'],
  ['e', '1385,560 1420,640 1470,700'],
  ['e', '1310,660 1285,720 1240,810 1235,850'],
  ['e', '1285,715 1310,740 1360,940'],
  ['e', '1240,855 1470,820'],
  ['e', '1290,920 1300,1090 1280,1200 1275,1300 1285,1400 1310,1440'],
  ['e', '1255,1020 1275,1080 1290,1170 1270,1230 1285,1290'],
  ['e', '1310,1440 1330,1390 1370,1330 1430,1332'],
  ['e', '1385,1240 1400,1290 1398,1332'],
  ['e', '1310,1440 1280,1460 1255,1440 1220,1475 1215,1520'],
  ['e', '1420,1020 1415,970 1470,975'],
  ['e', '1065,1170 1060,1270 1015,1320 1030,1380 960,1400 940,1420'],
  ['e', '1060,1270 1100,1320'],
  ['e', '950,1290 955,1380 1010,1390'],
  ['e', '935,1350 905,1420 950,1490'],
  ['e', '895,1340 875,1430 910,1520'],
  ['e', '640,1365 685,1430 745,1430'],
  ['e', '640,1310 750,1330'],
  ['e', '645,1310 645,1360'],
  ['e', '730,1240 735,1360'],
  ['e', '745,1430 742,1520'],
  ['e', '720,1240 780,1250'],
  ['e', '1030,1240 1020,1150'],
  ['e', '200,70 340,100'],
  ['e', '205,44 210,130'],
  ['e', '260,44 255,105'],
  ['e', '1420,180 1440,210 1350,260'],
];

// Small running tracks drawn on school grounds.
const TRACKS = [
  [534, 23, 12, 28], [220, 343, 26, 16], [22, 405, 13, 28], [96, 411, 14, 20], [97, 463, 13, 20], [229, 394, 26, 17],
  [262, 274, 24, 18], [320, 242, 28, 16], [648, 432, 20, 14], [565, 626, 26, 16], [460, 576, 24, 12], [568, 668, 14, 20],
  [738, 34, 28, 12], [725, 256, 14, 24], [832, 457, 22, 46], [1115, 442, 22, 12], [1127, 466, 24, 12], [831, 594, 14, 26],
  [1333, 308, 22, 8], [1455, 619, 14, 26], [1508, 207, 12, 24], [1654, 108, 20, 14], [1947, 192, 24, 12], [1937, 224, 20, 10],
  [1761, 347, 26, 15], [1708, 484, 14, 26], [1725, 484, 14, 26], [2184, 96, 26, 12], [2178, 375, 14, 20], [2133, 445, 20, 14],
  [1974, 471, 26, 14], [1911, 542, 14, 24], [1607, 662, 14, 26],
];

const LABELS = [
  ['Huayin St', 117, 24, 13, 28],
  ['Civic Blvd', 262, 83, 8, 30],
  ['Section 3, Civic Blvd', 737, 181, 4, 29],
  ['Section 2, Bade Rd', 842, 118, -13, 29],
  ['Zhucuolun', 851, 19, 0, 30],
  ['Zhonglun', 1131, 149, 0, 30],
  ['Dingdongshi', 1363, 4, 0, 30],
  ['Bade Road Section 4', 1484, 63, -6, 29],
  ['Civic Blvd', 1281, 186, -9, 29],
  ['Civic Blvd.', 1479, 185, 4, 30],
  ['Poxin', 1184, 594, 0, 30],
  ["Long'anpo", 933, 669, 0, 30],
  ['Sanzhangli', 1427, 669, 0, 30],
  ['Xingya', 1552, 357, 0, 30],
  ['Yongji Rd', 1736, 166, 0, 30],
  ['Yongchunpi', 1883, 302, 0, 30],
  ['Dongxin', 2060, 24, 0, 30],
  ['Zhongpo', 2074, 388, 0, 30],
  ['東門', 468, 496, 0, 30],
  ['四維路', 1043, 487, -90, 27],
  ['Jianguo Expy', 720, 372, 86, 29],
  ['Yanji St', 1246, 464, 76, 29],
  ['街', 1212, 669, -80, 26],
  ['St.', 335, 683, 0, 30],
];

const STATIONS = [
  [141, 134], [314, 182], [588, 261], [483, 533], [659, 542],
  [907, 285], [1053, 285], [1304, 291], [900, 550], [1664, 565],
];

const ROUTE =
  '868,369 719,276 706,228 707,182 824,189 991,171 1184,193 1310,169 1308,408 1304,559 1422,561 1534,569 1536,560 1514,561';

const ROUTE_STOPS = [
  [719, 276], [706, 228], [707, 182], [824, 189], [991, 171], [1184, 193], [1310, 169], [1308, 408], [1304, 559], [1422, 561],
];

function Areas({ items, fill }) {
  return items.map(([t, p]) => <polygon key={t + p} points={project(t, p)} fill={fill} />);
}

function Lines({ items, stroke, extra = 0, cap = 'round' }) {
  return items.map(([t, p, w = 2]) => (
    <polyline
      key={t + p}
      points={project(t, p)}
      fill="none"
      stroke={stroke}
      strokeWidth={w + extra}
      strokeLinecap={cap}
      strokeLinejoin="round"
    />
  ));
}

function Shield({ x, y, children }) {
  return (
    <g>
      <rect x={x - 24} y={y - 17} width="48" height="34" rx="6" fill="#fff" stroke="#262626" strokeWidth="2.5" />
      <text x={x} y={y + 8} textAnchor="middle" fontSize="22" fontWeight="700" fill="#262626">
        {children}
      </text>
    </g>
  );
}

function Station({ x, y }) {
  return (
    <g transform={`translate(${x - 22} ${y - 22})`}>
      <ellipse cx="22" cy="22" rx="25" ry="20" transform="rotate(-45 22 22)" fill="#fff" opacity="0.9" />
      <path d="M2 21 C4 9 17 0 30 0 C41 0 46 8 42.500 18.500 L35 18.500 C37 8 30 4 21 6 C13 8 7 14 2 21Z" fill="#4a66cb" />
      <path d="M1 25 L8 25 C6 35 12 39 21 37 C30 35 37 29 42 21 C40 34 28 43.500 16 43.500 C3 43.500 -2 35 1 25Z" fill="#27a74c" />
      <path d="M2 23 L12 18 L17 13 L30 13 L27 16 L19 16 L33 18 L29 21 L21 20 L16 25 L2 25Z" fill="#27a74c" />
      <path d="M42 20 L32 25 L27 31 L14 31 L17 28 L25 28 L11 26 L15 23 L23 24 L28 18.500 L42 18.500Z" fill="#4a66cb" />
    </g>
  );
}

function RouteMap() {
  return (
    <svg
      viewBox="0 0 2196 676"
      role="img"
      aria-label="推薦路線地圖"
      className="block w-full overflow-hidden font-['Roboto','Noto_Sans_CJK_TC',sans-serif]"
    >
      <rect width="2196" height="676" fill="#e5e4e0" />
      <Areas items={HILLS} fill="#dcd9d0" />
      <Areas items={PINK} fill="#e9d1da" />
      <Areas items={SAND} fill="#e5dcb8" />
      <Areas items={GREEN} fill="#b7e5a0" />
      <Areas items={[['e', '545,1400 600,1380 655,1400 620,1450 600,1490 560,1520']]} fill="#cbd6ab" />
      {TRACKS.map(([x, y, w, h]) => (
        <rect key={`${x}-${y}`} x={x - w / 2} y={y - h / 2} width={w} height={h} rx={Math.min(w, h) / 2.4} fill="none" stroke="#a5df8c" strokeWidth="3" />
      ))}
      <Areas items={BUILDINGS} fill="#e9eaf0" />
      <rect x="258" y="500" width="18" height="18" transform="rotate(25 267 509)" fill="none" stroke="#e9eaf0" strokeWidth="5" />
      <Areas items={WATER} fill="#78cdf0" />
      <ellipse cx="643" cy="608" rx="7" ry="13" transform="rotate(-22 643 608)" fill="none" stroke="#78cdf0" strokeWidth="5" />
      <polyline points={project('e', '1390,1000 1420,1030 1440,1060 1450,1100 1445,1130 1454,1155')} fill="none" stroke="#8cc9f2" strokeWidth="2" />
      <Lines items={STREETS} stroke="#ffffff" />
      <Lines items={ROADS} stroke="#d4d9e8" extra={4} />
      <Lines items={ROADS} stroke="#ffffff" />
      <circle cx="1053" cy="405" r="27" fill="#fff" />
      <circle cx="1053" cy="405" r="18" fill="none" stroke="#e0e2ea" strokeWidth="3" strokeDasharray="20 8" />
      <circle cx="1053" cy="405" r="9" fill="#e5e4e0" stroke="#d4d9e8" strokeWidth="2" />
      <circle cx="146" cy="367" r="15" fill="#fff" />
      <circle cx="146" cy="367" r="6" fill="#e5e4e0" stroke="#d4d9e8" strokeWidth="2" />
      <polyline points={project('c', '410,44 402,640 388,1520')} fill="none" stroke="#dedbd3" strokeWidth="3" />
      <Lines items={[['e', '528,1380 538,1530', 22]]} stroke="#ffffff" extra={5} cap="butt" />
      <Lines items={[['e', '528,1380 538,1530', 22]]} stroke="#f2dc9a" cap="butt" />
      <Lines items={[['e', '515,1370 515,1385', 14], ['e', '532,1330 535,1375', 12]]} stroke="#f1cf6b" />
      <Lines items={HIGHWAY_RAMPS} stroke="#f1cf6b" />
      <Lines items={HIGHWAYS} stroke="#ffffff" extra={5} />
      <Lines items={HIGHWAYS} stroke="#f1cf6b" />
      <Lines items={[['w', '175,130 205,136'], ['w', '190,125 230,134'], ['w', '362,155 385,160'], ['w', '175,140 200,146']]} stroke="#ffffff" />

      <g fill="#1f6d10">
        <ellipse cx="670" cy="664" rx="8" ry="6" />
        <ellipse cx="679" cy="661" rx="9" ry="7" />
        <ellipse cx="684" cy="666" rx="7" ry="5" />
        <path d="M674 668 L682 668 L681 676 L675 676Z" />
      </g>

      {STATIONS.map(([x, y]) => (
        <Station key={`${x}-${y}`} x={x} y={y} />
      ))}
      <Shield x={210} y={125}>1甲</Shield>
      <Shield x={464} y={226}>5</Shield>
      <Shield x={128} y={433}>9</Shield>

      <g fill="#1c1c1c" stroke="#ffffff" strokeWidth="4" strokeLinejoin="round" paintOrder="stroke">
        {LABELS.map(([text, x, y, r, size]) => (
          <text key={`${text}-${x}`} x={x} y={y} fontSize={size} textAnchor="middle" transform={`rotate(${r} ${x} ${y})`}>
            {text}
          </text>
        ))}
        <text x="-2" y="295" fontSize="30">ngzhong</text>
        <text x="2055" y="162" fontSize="30">Houshanpi</text>
        <text x="1488" y="433" fontSize="51" fontWeight="500" textAnchor="middle" fill="#000">Taipei</text>
        <text x="24" y="592" fontSize="32" fill="#4b5680" className="tracking-[0.25em]">ZHONGZHENG</text>
        <text x="1529" y="560" fontSize="32" fill="#4b5680" className="tracking-[0.15em]">XINYI</text>
      </g>

      <g fill="#1f77b4" fillOpacity="0.7">
        <circle cx="868" cy="369" r="24" />
        <circle cx="1514" cy="561" r="24" />
      </g>
      <polyline points={ROUTE} fill="none" stroke="#1f77b4" strokeWidth="5" strokeLinejoin="round" />
      {ROUTE_STOPS.map(([x, y]) => (
        <circle key={`${x}-${y}`} cx={x} cy={y} r="5" fill="#1f77b4" />
      ))}
    </svg>
  );
}

/* ---------- Chart ---------- */

const HOURLY = [
  92, 163, 143, 102, 122, 243, 302, 862, 1113, 941, 404, 453,
  583, 404, 322, 460, 590, 990, 1230, 1332, 910, 583, 412, 511,
];

function TrafficChart() {
  const left = 200;
  const right = 2046;
  const base = 327;
  const unit = 0.2145;
  const step = (right - left) / HOURLY.length;
  return (
    <svg
      viewBox="0 0 2247 420"
      role="img"
      aria-label="市民大道四段每小時車流數"
      className="block w-full font-['DejaVu_Sans',sans-serif]"
    >
      {[500, 1000].map((v) => (
        <line key={v} x1={left} x2={right} y1={base - v * unit} y2={base - v * unit} stroke="#eeeeee" strokeWidth="2.5" />
      ))}
      {HOURLY.map((v, i) => (
        <rect
          key={i}
          x={left + step * (i + 0.1)}
          y={base - v * unit}
          width={step * 0.8}
          height={v * unit}
          fill="#7f7f7f"
          fillOpacity="0.6"
        />
      ))}
      <line x1={left} x2={right} y1={base} y2={base} stroke="#444444" strokeWidth="2.5" />
      <g fill="#444444" fontSize="30">
        {[0, 500, 1000].map((v) => (
          <text key={v} x={left - 3} y={base - v * unit + 11} textAnchor="end">
            {v}
          </text>
        ))}
        {HOURLY.map((_, i) => {
          const x = left + step * (i + 0.5);
          return (
            <text key={i} x={x} y={base + 38} transform={`rotate(30 ${x} ${base + 27})`}>
              {`${i}:00`}
            </text>
          );
        })}
      </g>
    </svg>
  );
}

/* ---------- Table ---------- */

function Smile() {
  return (
    <svg viewBox="0 0 32 32" className="size-[31px]" aria-hidden="true">
      <defs>
        <linearGradient id="smile" x1="0" y1="0" x2="0" y2="1">
          <stop offset="0" stopColor="#fff0c4" />
          <stop offset="0.35" stopColor="#ffcb45" />
          <stop offset="0.65" stopColor="#ffc52e" />
          <stop offset="1" stopColor="#ffe712" />
        </linearGradient>
      </defs>
      <circle cx="16" cy="16" r="15" fill="url(#smile)" stroke="#f7a034" strokeWidth="1.500" />
      <ellipse cx="11.500" cy="13" rx="1.700" ry="2.800" fill="#8a5208" />
      <ellipse cx="20.800" cy="13" rx="1.700" ry="2.800" fill="#8a5208" />
      <path d="M10 21.500 Q16 26 22 21.500" fill="none" stroke="#95600f" strokeWidth="1.400" strokeLinecap="round" />
    </svg>
  );
}

function RedBall() {
  return (
    <svg viewBox="0 0 32 32" className="size-[31px]" aria-hidden="true">
      <defs>
        <radialGradient id="ball" cx="0.5" cy="0.75" r="0.65">
          <stop offset="0" stopColor="#ff7468" />
          <stop offset="0.5" stopColor="#ff2f1e" />
          <stop offset="1" stopColor="#e01c10" />
        </radialGradient>
        <linearGradient id="gloss" x1="0" y1="0" x2="0" y2="1">
          <stop offset="0" stopColor="#ffb4b0" />
          <stop offset="1" stopColor="#ff5a4e" />
        </linearGradient>
      </defs>
      <circle cx="16" cy="16" r="15" fill="url(#ball)" stroke="#b51d14" strokeWidth="1.200" />
      <ellipse cx="16" cy="9" rx="12" ry="7" fill="url(#gloss)" />
    </svg>
  );
}

function Rating({ icon: Icon, count, label }) {
  return (
    <span role="img" aria-label={`${label} ${count}`} className="flex gap-[5px]">
      {Array.from({ length: count }, (_, i) => (
        <Icon key={i} />
      ))}
    </span>
  );
}

function Tick({ label, checked }) {
  return (
    <input
      type="checkbox"
      aria-label={label}
      defaultChecked={checked}
      className="mx-auto mt-3 block size-12 appearance-none border-[6px] border-[#dddddd] bg-white checked:bg-[#07599b] checked:shadow-[inset_0_0_0_9px_#ffffff]"
    />
  );
}

function DataTable({ columns, rows }) {
  return (
    <div className="min-h-[834px] border-[3px] border-[#dddddd]">
      <table className="w-full table-fixed border-collapse text-left text-4xl text-[#222222]">
        <colgroup>
          <col className="w-[141px]" />
          {columns.map((c) => (
            <col key={c} />
          ))}
        </colgroup>
        <thead>
          <tr className="h-[84px] border-b-[3px] border-[#dddddd] bg-[#f9f9f9]">
            <th className="border-r-2 border-[#dddddd] p-0">
              <Tick label="全選" />
            </th>
            {columns.map((c) => (
              <th key={c} className="border-r-2 border-[#dddddd] px-5 pt-3 pb-0 font-bold last:border-r-0">
                {c}
              </th>
            ))}
          </tr>
        </thead>
        <tbody>
          {rows.map((cells, r) => (
            <tr key={r} className={r === 0 ? 'h-[83px] border-b-[3px] border-[#dddddd] bg-[#dbecfa]' : 'h-[83px] border-b-[3px] border-[#dddddd] bg-white'}>
              <td className="border-r-2 border-[#dddddd] p-0">
                <Tick label={`選取第 ${r + 1} 列`} checked={r === 0} />
              </td>
              {cells.map((cell, i) => (
                <td key={i} className="border-r-2 border-[#eeeeee] px-5 py-0 last:border-r-0">
                  <div className="overflow-hidden whitespace-nowrap oldstyle-nums">{cell}</div>
                </td>
              ))}
            </tr>
          ))}
        </tbody>
      </table>
    </div>
  );
}

const ROUTE_ROWS = [
  ['忠孝東路 ⇢ 市民大道 ⇢ 復興南路一段 ·', '12 min', 3],
  ['忠孝東路 ⇢ 市民大道 ⇢ 光復南路 ⇢ 信', '14 min', 1],
  ['忠孝東路 ⇢ 市民大道 ⇢ 忠孝東路 ⇢ 基', '14 min', 1],
].map(([path, time, n]) => [path, time, <Rating key="r" icon={Smile} count={n} label="舒適度" />]);

const ROAD_ROWS = [
  ['1', '市民大道四段', '1130', 3],
  ['2', '基隆路一段', '940', 2],
  ['3', '信義路五段', '654', 2],
  ['4', '松高路', '421', 1],
  ['5', '市民大道三段', '338', 1],
].map(([rank, road, flow, n]) => [rank, road, flow, <Rating key="r" icon={RedBall} count={n} label="壅塞程度" />]);

/* ---------- Page ---------- */

function Panel({ title, children }) {
  return (
    <section className="-mt-0.5 rounded-t-xl border-2 border-[#d8d8d8] bg-white">
      <h2 className="border-b-2 border-[#d8d8d8] px-6 text-[41px] leading-[67px] tracking-tight text-[#4bc3f6]">{title}</h2>
      {children}
    </section>
  );
}

const BUTTON =
  "h-[90px] cursor-pointer rounded-lg border-2 border-[#bbbbbb] text-[26px] font-bold tracking-widest text-[#555555]";
const FIELD =
  "h-[90px] w-[330px] rounded-lg border-2 border-[#d1d1d1] bg-white px-6 font-['Roboto','Noto_Sans_CJK_TC',sans-serif] text-[26px] text-black";

export default function App() {
  return (
    <div className="bg-white px-[89px] py-[19px] font-['Lato','Noto_Sans_CJK_TC',sans-serif]">
      <main className="rounded-lg bg-white pb-[35px] shadow-[0_0_10px_9px_#ebebeb]">
        <header className="rounded-lg bg-[#4bc3f6] px-11 pb-2 text-white">
          <h1 className="text-[104px] leading-[170px] tracking-tight">
            ComforTrans <span className="font-['DejaVu_Sans',sans-serif] text-8xl leading-none font-bold">ʕ·ᴥ·ʔ</span>
          </h1>
        </header>

        <div className="px-6 pt-[27px]">
          <Panel title="Try ComforTans!">
            <form className="px-[86px] pt-6 pb-[13px]" onSubmit={(e) => e.preventDefault()}>
              <div className="flex gap-0.5">
                <button type="button" className={`${BUTTON} w-[318px] bg-white`}>搭乘大眾運輸</button>
                <button type="button" aria-pressed="true" className={`${BUTTON} w-[260px] bg-[#dddddd]`}>自行駕駛</button>
              </div>
              <label htmlFor="destination" className="mt-7 mb-4 block text-4xl leading-[50px] font-bold text-[#222222]">
                目的地 Destination:
              </label>
              <input id="destination" type="text" defaultValue="台北101" className={`${FIELD} block`} />
              <label htmlFor="departure" className="mt-10 mb-4 block text-4xl leading-[50px] font-bold text-[#222222]">
                出發時間 Departure time:
              </label>
              <div className="flex gap-0.5">
                <input id="departure" type="text" defaultValue="2017/10/24 12:00" className={FIELD} />
                <button type="submit" className={`${BUTTON} w-[192px] bg-white`}>GO</button>
              </div>
            </form>
          </Panel>

          <Panel title="推薦路線 Recommdation Routes">
            <div className="px-6 pt-6 pb-12">
              <RouteMap />
            </div>
            <DataTable columns={['路線', '預估時間', '舒適度']} rows={ROUTE_ROWS} />
          </Panel>

          <Panel title="車流壅塞路段 Congested Roads">
            <div className="pt-[74px] pb-[102px]">
              <h3 className="mb-20 text-center text-[40px] leading-[60px] text-[#444444]">市民大道四段</h3>
              <TrafficChart />
            </div>
            <DataTable columns={['ranking', '道路', '車流數', '壅塞程度']} rows={ROAD_ROWS} />
          </Panel>
        </div>
      </main>
    </div>
  );
}
